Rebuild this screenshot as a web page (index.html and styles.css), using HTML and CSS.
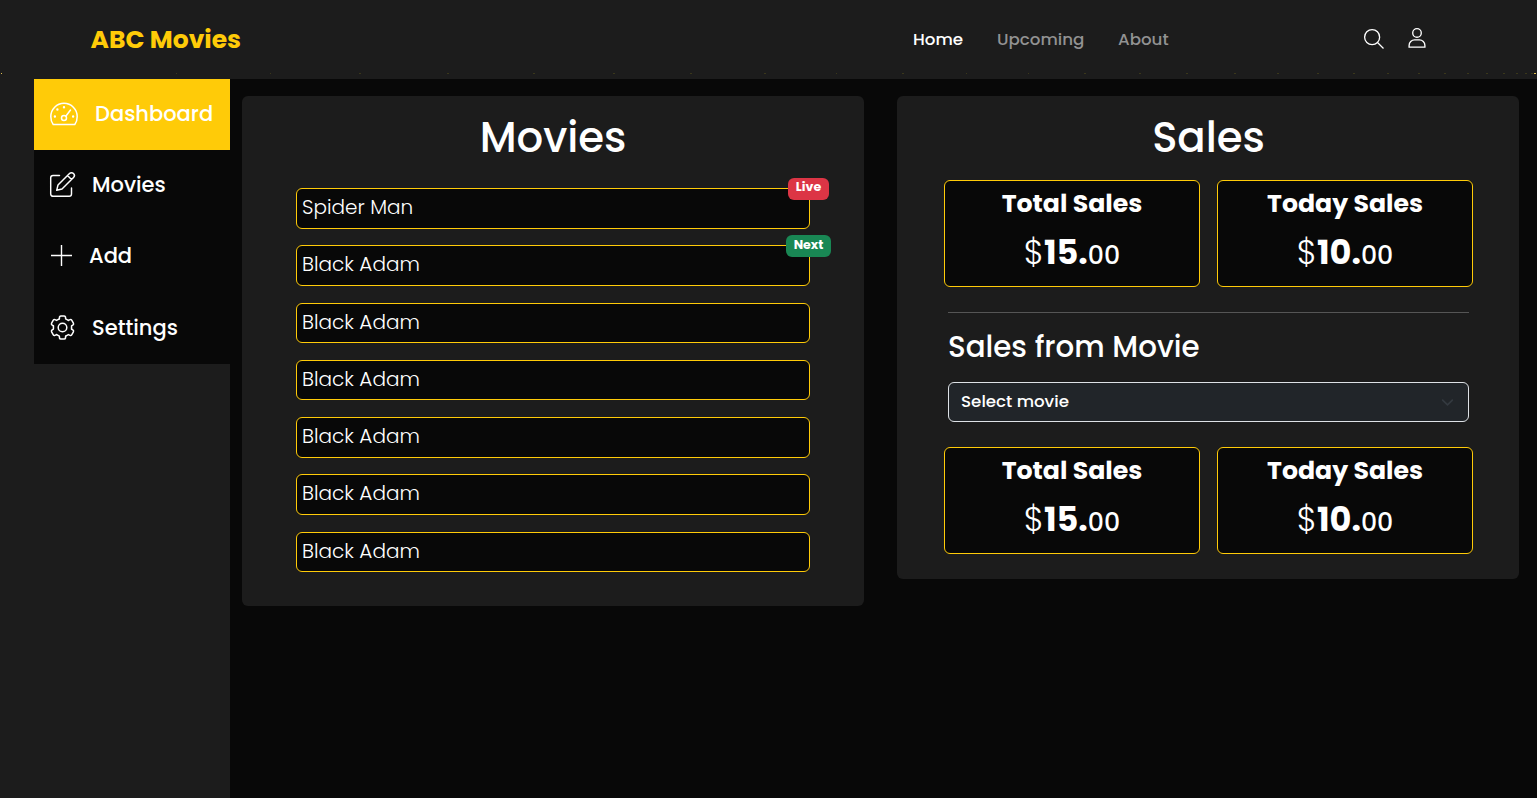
FILE: index.html
```html
<!DOCTYPE html>
<html lang="en">
<head>
<meta charset="utf-8">
<title>ABC Movies</title>
<link rel="stylesheet" href="styles.css">
</head>
<body>
<header class="navbar">
  <a class="brand"><span>ABC Movies</span></a>
  <nav class="links">
    <a class="link home active">Home</a>
    <a class="link upcoming">Upcoming</a>
    <a class="link about">About</a>
  </nav>
  <div class="tools">
    <svg class="search" viewBox="0 0 16 16" fill="none" stroke="currentColor" stroke-width="1.05"><circle cx="6.5" cy="6.5" r="6"/><path d="M11 11l4.600 4.600"/></svg>
    <svg class="user" viewBox="0 0 18 21" fill="none" stroke="currentColor" stroke-width="1.4"><circle cx="9" cy="5.2" r="4.5"/><path d="M.7 20V18.3C.7 15 3.3 12.5 6.5 12.5h5c3.200 0 5.800 2.500 5.800 5.800V20z"/></svg>
  </div>
</header>
<svg class="specks" viewBox="0 0 1537 1" shape-rendering="crispEdges"><path class="bright" d="M1 .5h1M1534 .5h2"/><path class="dim" d="M176 .5h1M270 .5h1M359 .5h2M447 .5h2M533 .5h2M613 .5h2M690 .5h2M764 .5h2M836 .5h1M902 .5h2M966 .5h1M1028 .5h1M1084 .5h2M1139 .5h2M1186 .5h2M1234 .5h2M1277 .5h2M1317 .5h2M1353 .5h2M1387 .5h2M1418 .5h2M1444 .5h2M1467 .5h2M1486 .5h2M1503 .5h2M1516 .5h2M1525 .5h2M1531 .5h2"/></svg>
<div class="body">
  <aside class="sidebar">
    <ul class="menu">
      <li class="item current"><svg class="gauge" viewBox="0 0 28 24" fill="none" stroke="currentColor" stroke-width="1.5" stroke-linecap="round" stroke-linejoin="round"><path d="M3.200 22.500C1.500 20.300.8 17.700.8 14.500a13.200 13.200 0 0 1 26.400 0c0 3.200-.7 5.800-2.400 8z"/><circle cx="14" cy="16" r="2.500"/><path d="M15.800 14.200L20.500 8"/><path stroke-width="2.400" d="M14 5.200v.01M7.400 7.500v.01M4.900 14.500v.01M23.100 14.500v.01"/></svg><span>Dashboard</span></li>
      <li class="item"><svg class="pen" viewBox="0 0 25 25" fill="none" stroke="currentColor" stroke-width="1.45" stroke-linecap="round" stroke-linejoin="round"><path d="M9.500 3.500H3A2.300 2.300 0 0 0 .7 5.800V22A2.300 2.300 0 0 0 3 24.300H19.200A2.300 2.300 0 0 0 21.500 22V16M8 13L19.500 1.500a2.500 2.500 0 0 1 4 4L12 17l-5.300 1.300zM17.500 3.500l4 4"/></svg><span>Movies</span></li>
      <li class="item"><svg class="plus" viewBox="0 0 21 21" stroke="currentColor" stroke-width="1.4"><path d="M10.500 0v21M0 10.500h21"/></svg><span>Add</span></li>
      <li class="item last"><svg class="gear" viewBox="0 0 25 25" fill="none" stroke="currentColor" stroke-width="1.5" stroke-linejoin="round" stroke-linecap="round"><defs><path id="tooth" d="M9.350 3.850L9.500 2Q9.700.9 10.800.9H14.200Q15.300.9 15.500 2L15.650 3.850L18.400 5.450"/></defs><circle cx="12.500" cy="12.500" r="4.300"/><use href="#tooth"/><use href="#tooth" transform="rotate(60 12.500 12.500)"/><use href="#tooth" transform="rotate(120 12.500 12.500)"/><use href="#tooth" transform="rotate(180 12.500 12.500)"/><use href="#tooth" transform="rotate(240 12.500 12.500)"/><use href="#tooth" transform="rotate(300 12.500 12.500)"/></svg><span>Settings</span></li>
    </ul>
  </aside>
  <main class="content">
    <section class="panel movies">
      <h1 class="title">Movies</h1>
      <ul class="list">
        <li class="row"><span>Spider Man</span><b class="badge live">Live</b></li>
        <li class="row"><span>Black Adam</span><b class="badge next">Next</b></li>
        <li class="row"><span>Black Adam</span></li>
        <li class="row"><span>Black Adam</span></li>
        <li class="row"><span>Black Adam</span></li>
        <li class="row"><span>Black Adam</span></li>
        <li class="row"><span>Black Adam</span></li>
      </ul>
    </section>
    <section class="panel sales">
      <h1 class="title">Sales</h1>
      <div class="cards">
        <div class="card"><h2>Total Sales</h2><p><i>$</i><b>15.</b><small>00</small></p></div>
        <div class="card"><h2>Today Sales</h2><p><i>$</i><b>10.</b><small>00</small></p></div>
      </div>
      <hr class="rule">
      <h2 class="subtitle">Sales from Movie</h2>
      <div class="select"><span>Select movie</span><svg class="chevron" viewBox="0 0 16 16" fill="none" stroke="#343a40" stroke-width="2" stroke-linecap="round" stroke-linejoin="round"><path d="m2 5 6 6 6-6"/></svg></div>
      <div class="cards">
        <div class="card"><h2>Total Sales</h2><p><i>$</i><b>15.</b><small>00</small></p></div>
        <div class="card"><h2>Today Sales</h2><p><i>$</i><b>10.</b><small>00</small></p></div>
      </div>
    </section>
  </main>
</div>
</body>
</html>
```
FILE: styles.css
```css
* { box-sizing: border-box; }
body, h1, h2, p, ul { margin: 0; padding: 0; }
ul { list-style: none; }
body { height: 798px; overflow: hidden; background: #080808; color: #fff; font-family: Poppins, Inter, "Noto Sans", sans-serif; white-space: nowrap; }
svg { display: block; flex: none; overflow: visible; }
.navbar { display: flex; align-items: center; height: 79px; padding: 0 111px 2px 90.500px; background: #1c1c1c; }
.brand { width: 822.500px; padding-top: 2px; color: #ffcb08; font-size: 25px; font-weight: 700; line-height: 38px; }
.links { display: flex; width: 451px; gap: 33px; font-size: 16.700px; font-weight: 500; line-height: 24px; }
.link { color: #929292; }
.active { color: #fff; }
.home { width: 51px; }
.upcoming { width: 88px; }
.tools { display: flex; align-items: center; gap: 24px; }
.search { width: 20px; height: 20px; }
.user { width: 18px; height: 20px; margin-top: -1px; }
.specks { position: absolute; left: 0; top: 73px; width: 1537px; height: 1px; fill: none; }
.bright { stroke: #e0c050; }
.dim { stroke: #3a371a; }
.body { display: flex; height: 719px; }
.sidebar { width: 230px; padding-left: 34px; background: #1c1c1c; }
.menu { background: #080808; height: 285px; }
.item { display: flex; align-items: center; height: 71.300px; padding: 0 0 2px 16px; font-size: 21px; font-weight: 500; line-height: 32px; }
.current { height: 71px; background: #ffcb08; }
.last { padding-bottom: 1px; }
.last .gear { margin-top: -1px; }
.gauge { width: 28px; height: 24px; margin-right: 17px; }
.pen { width: 25px; height: 25px; margin-right: 17px; }
.plus { width: 21px; height: 21px; margin: 0 17px 0 1px; }
.gear { width: 25px; height: 25px; margin-right: 17px; }
.content { display: flex; align-items: flex-start; gap: 33px; padding: 17px 18px 0 12px; }
.panel { width: 622px; border-radius: 6px; background: #1c1c1c; }
.movies { height: 510px; padding: 16px 54px 0; }
.sales { height: 483px; padding: 16px 46px 0 47px; }
.title { height: 51px; text-align: center; font-size: 41.800px; font-weight: 500; line-height: 51px; }
.list { display: flex; flex-direction: column; gap: 16.800px; margin-top: 25px; }
.row { position: relative; width: 514px; height: 40.500px; padding: 3px 5px; border: 1px solid #ffcb08; border-radius: 6px; background: #080808; font-size: 20px; font-weight: 300; line-height: 31px; }
.badge { position: absolute; top: -11px; height: 22px; border-radius: 6px; text-align: center; font-size: 12.600px; font-weight: 700; line-height: 17px; }
.live { right: -20px; width: 41px; background: #dc3545; }
.next { right: -22px; width: 45px; background: #198754; line-height: 19px; }
.cards { display: flex; gap: 17px; }
.title + .cards { margin-top: 17px; }
.card { width: 256px; height: 107px; padding-top: 4px; border: 1px solid #ffcb08; border-radius: 6px; background: #080808; text-align: center; }
.card h2 { font-size: 25.200px; font-weight: 700; line-height: 37px; }
.card p { display: flex; justify-content: center; align-items: baseline; margin-top: 5px; font-size: 33.600px; line-height: 51px; }
.card i { font-style: normal; font-weight: 300; }
.card b { font-weight: 700; }
.card small { font-size: 25.200px; font-weight: 500; }
.rule { height: 1px; margin: 25px 4px 0; border: 0; background: #555; }
.subtitle { margin: 15px 4px 0; font-size: 29.300px; font-weight: 500; line-height: 38px; }
.select { display: flex; justify-content: space-between; align-items: center; height: 40px; margin: 16px 4px 25px; padding: 0 14px 2px 12px; border: 1px solid #dee2e6; border-radius: 6px; background: #212529; font-size: 16.700px; font-weight: 500; line-height: 24px; }
.chevron { width: 13px; height: 13px; margin-top: 3px; }
```
